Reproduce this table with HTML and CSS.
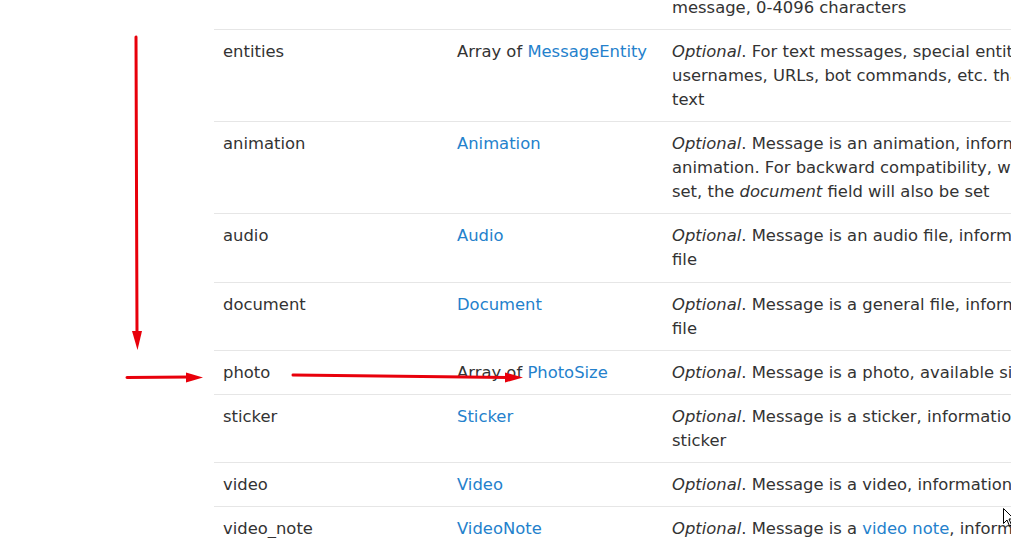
FILE: index.html
```html
<!DOCTYPE html>
<html>
<head>
<meta charset="utf-8">
<link rel="stylesheet" href="styles.css">
</head>
<body>
<div class="page">
  <table class="fields">
    <colgroup>
      <col class="c-name">
      <col class="c-type">
      <col class="c-desc">
    </colgroup>
    <tbody>
      <tr>
        <td>text</td>
        <td>String</td>
        <td class="desc"><em>Optional</em>. For text messages, the actual UTF-8 text of the<br>message, 0-4096 characters</td>
      </tr>
      <tr>
        <td>entities</td>
        <td>Array of <a href="#">MessageEntity</a></td>
        <td class="desc"><em>Optional</em>. For text messages, special entities like<br>usernames, URLs, bot commands, etc. that appear in the<br>text</td>
      </tr>
      <tr>
        <td>animation</td>
        <td><a href="#">Animation</a></td>
        <td class="desc"><em>Optional</em>. Message is an animation, information about the<br>animation. For backward compatibility, when this field is<br>set, the <em>document</em> field will also be set</td>
      </tr>
      <tr>
        <td>audio</td>
        <td><a href="#">Audio</a></td>
        <td class="desc"><em>Optional</em>. Message is an audio file, information about the<br>file</td>
      </tr>
      <tr>
        <td>document</td>
        <td><a href="#">Document</a></td>
        <td class="desc"><em>Optional</em>. Message is a general file, information about the<br>file</td>
      </tr>
      <tr>
        <td>photo</td>
        <td>Array of <a href="#">PhotoSize</a></td>
        <td class="desc"><em>Optional</em>. Message is a photo, available sizes of the photo</td>
      </tr>
      <tr>
        <td>sticker</td>
        <td><a href="#">Sticker</a></td>
        <td class="desc"><em>Optional</em>. Message is a sticker, information about the<br>sticker</td>
      </tr>
      <tr>
        <td>video</td>
        <td><a href="#">Video</a></td>
        <td class="desc"><em>Optional</em>. Message is a video, information about the video</td>
      </tr>
      <tr>
        <td>video_note</td>
        <td><a href="#">VideoNote</a></td>
        <td class="desc"><em>Optional</em>. Message is a <a href="#">video note</a>, information about the video<br>message</td>
      </tr>
    </tbody>
  </table>

  <svg class="annotations" width="1011" height="538" viewBox="0 0 1011 538">
    <g fill="none" stroke="#e8000b" stroke-width="3" stroke-linecap="round">
      <path d="M136 37 L137 334"/>
      <path d="M127 377.5 L190 377"/>
      <path d="M293 375 L508 377.5"/>
    </g>
    <g fill="#e8000b">
      <path d="M132 331 L142 331 L137.5 350 Z"/>
      <path d="M186 372.5 L186 382.5 L203 377.5 Z"/>
      <path d="M505 372.5 L505 382.5 L523 377.5 Z"/>
    </g>
  </svg>

  <svg class="cursor" width="12" height="20" viewBox="0 0 12 20">
    <path d="M0.5 0.5 L0.5 15.5 L4 12 L6.5 18 L8.5 17 L6 11 L11 11 Z" fill="#fff" stroke="#000" stroke-width="1"/>
  </svg>
</div>
</body>
</html>
```
FILE: styles.css
```css
html, body {
  margin: 0;
  padding: 0;
  background: #fff;
}

body {
  width: 1011px;
  height: 538px;
  overflow: hidden;
  font-family: "DejaVu Sans", sans-serif;
  font-size: 16.4px;
  line-height: 24px;
  color: #333;
}

.page {
  position: relative;
  width: 1011px;
  height: 538px;
  overflow: hidden;
}

.fields {
  border-collapse: collapse;
  table-layout: fixed;
  width: 1350px;
  margin-left: 214px;
  margin-top: -39px;
}

.c-name { width: 234px; }
.c-type { width: 215px; }
.c-desc { width: 901px; }

.fields td {
  vertical-align: top;
  padding: 10px 9px 9.15px 9px;
  border-top: 1px solid #e6e6e6;
}

.fields td.desc {
  white-space: nowrap;
}

.fields a {
  color: #2481cc;
  text-decoration: none;
}

.fields em {
  font-style: italic;
}

.annotations {
  position: absolute;
  left: 0;
  top: 0;
  pointer-events: none;
}

.cursor {
  position: absolute;
  left: 1003px;
  top: 508px;
}
```
